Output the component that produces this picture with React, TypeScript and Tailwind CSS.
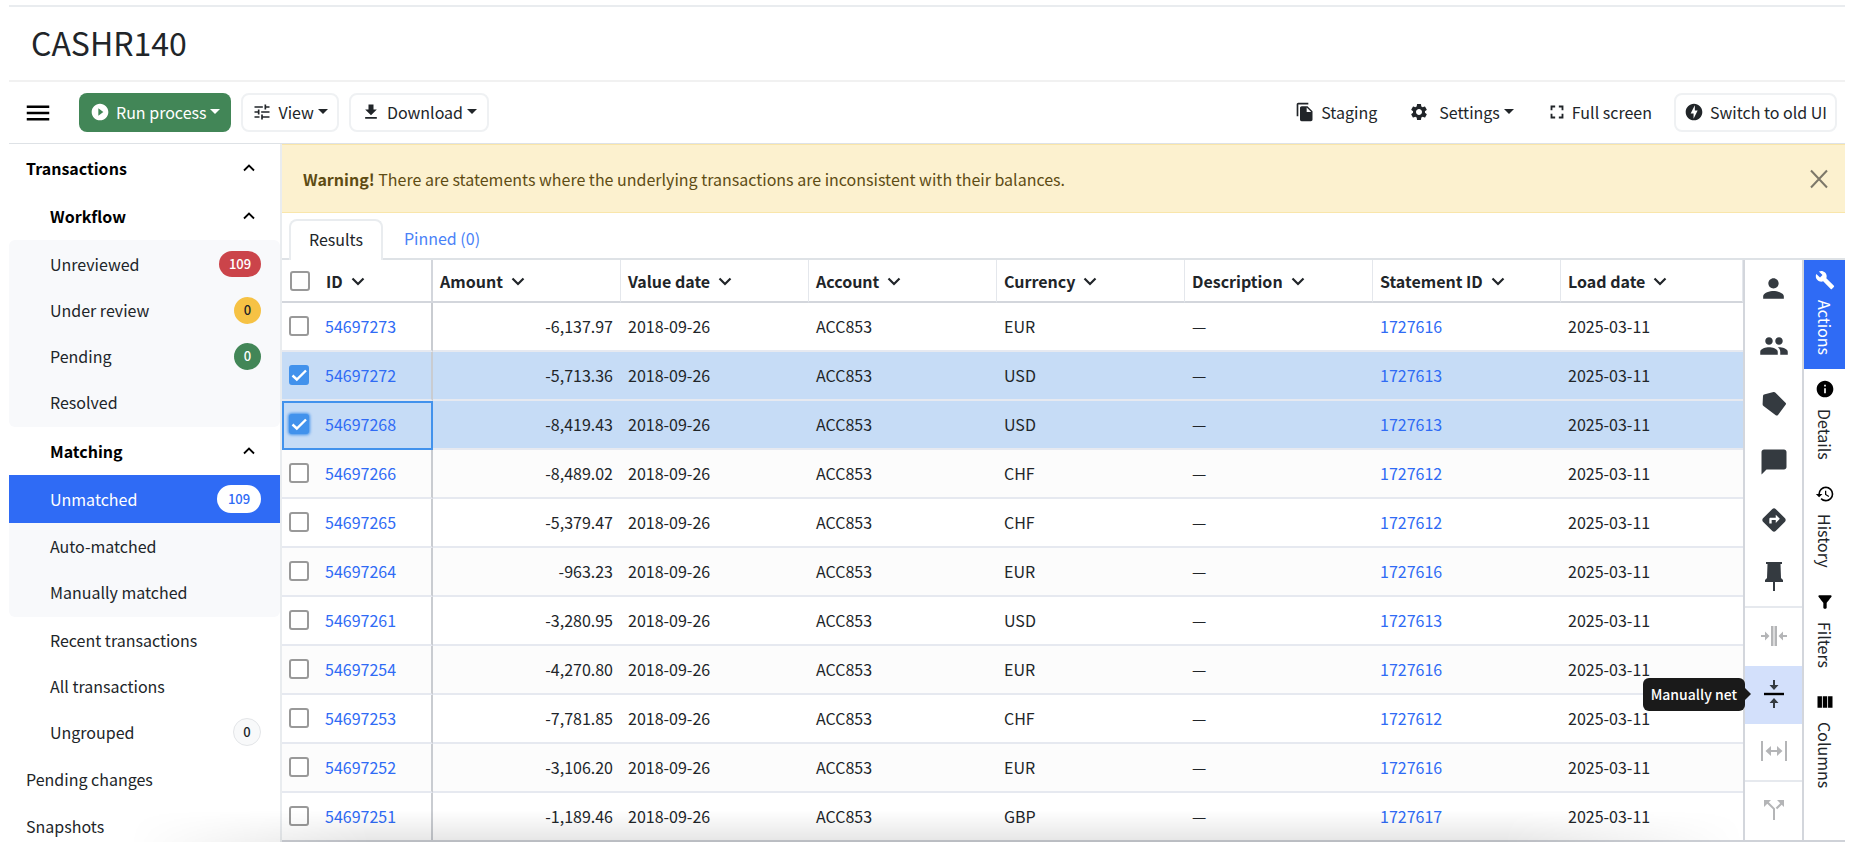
import type { ReactNode } from 'react';
import {
  MdBuild,
  MdChatBubble,
  MdDirections,
  MdFileCopy,
  MdFileDownload,
  MdFilterAlt,
  MdFullscreen,
  MdHistory,
  MdInfo,
  MdMenu,
  MdOfflineBolt,
  MdPeople,
  MdPerson,
  MdPlayCircleFilled,
  MdSettings,
  MdTune,
  MdViewColumn,
} from 'react-icons/md';

interface Transaction {
  id: string;
  amount: string;
  currency: string;
  statement: string;
  selected?: boolean;
  focused?: boolean;
}

const COLUMNS = ['Amount', 'Value date', 'Account', 'Currency', 'Description', 'Statement ID', 'Load date'];

const ROWS: Transaction[] = [
  { id: '54697273', amount: '-6,137.97', currency: 'EUR', statement: '1727616' },
  { id: '54697272', amount: '-5,713.36', currency: 'USD', statement: '1727613', selected: true },
  { id: '54697268', amount: '-8,419.43', currency: 'USD', statement: '1727613', selected: true, focused: true },
  { id: '54697266', amount: '-8,489.02', currency: 'CHF', statement: '1727612' },
  { id: '54697265', amount: '-5,379.47', currency: 'CHF', statement: '1727612' },
  { id: '54697264', amount: '-963.23', currency: 'EUR', statement: '1727616' },
  { id: '54697261', amount: '-3,280.95', currency: 'USD', statement: '1727613' },
  { id: '54697254', amount: '-4,270.80', currency: 'EUR', statement: '1727616' },
  { id: '54697253', amount: '-7,781.85', currency: 'CHF', statement: '1727612' },
  { id: '54697252', amount: '-3,106.20', currency: 'EUR', statement: '1727616' },
  { id: '54697251', amount: '-1,189.46', currency: 'GBP', statement: '1727617' },
];

function Caret() {
  return <span className="ml-1 border-x-[5px] border-t-[5px] border-x-transparent border-t-current" />;
}

function Chevron({ up = false }: { up?: boolean }) {
  return (
    <svg width="14" height="14" viewBox="0 0 14 14" fill="none" stroke="currentColor" strokeWidth={up ? 1.8 : 2.2}>
      {up ? <path d="M2 9.5l5-5 5 5" /> : <path d="M1.5 4.5L7 10l5.500-5.500" />}
    </svg>
  );
}

function Section({ label, top = false }: { label: string; top?: boolean }) {
  return (
    <button
      className={`flex h-12 w-full items-center justify-between pr-6 font-bold text-black ${top ? 'pl-[17px]' : 'pl-[41px]'}`}
    >
      {label}
      <Chevron up />
    </button>
  );
}

function NavItem({
  label,
  badge,
  badgeClass = '',
  top = false,
  active = false,
}: {
  label: string;
  badge?: string;
  badgeClass?: string;
  top?: boolean;
  active?: boolean;
}) {
  return (
    <a
      href="#"
      className={`flex items-center justify-between pr-[19px] ${top ? 'h-[47px] pl-[17px]' : 'min-h-[46px] pl-[41px]'} ${active ? 'bg-[#2f6bf5] text-white' : ''}`}
    >
      {label}
      {badge && (
        <span className={`flex items-center justify-center rounded-full text-[13px] font-medium ${badgeClass}`}>{badge}</span>
      )}
    </a>
  );
}

function ActionButton({ label, children, disabled = false, className = '' }: { label: string; children: ReactNode; disabled?: boolean; className?: string }) {
  return (
    <button
      aria-label={label}
      disabled={disabled}
      className={`relative flex h-[58px] w-full shrink-0 items-center justify-center pb-0.5 ${disabled ? 'text-[#b4b5b7]' : 'text-[#343a40]'} ${className}`}
    >
      {children}
    </button>
  );
}

function SideTab({ label, icon, active = false }: { label: string; icon: ReactNode; active?: boolean }) {
  return (
    <button
      role="tab"
      aria-selected={active}
      className={`flex w-full items-center gap-2.5 pt-2.5 pb-3.5 [writing-mode:vertical-rl] ${active ? 'bg-[#2f6bf5] text-white' : 'text-[#212529]'}`}
    >
      <span className={active ? 'text-white' : 'text-black'}>{icon}</span>
      {label}
    </button>
  );
}

function CheckBox({ label, checked = false, focused = false }: { label: string; checked?: boolean; focused?: boolean }) {
  return (
    <span className="relative flex size-5 shrink-0">
      <input
        type="checkbox"
        aria-label={label}
        defaultChecked={checked}
        className={`peer size-5 appearance-none rounded-[3px] border-2 border-[#999] bg-white checked:border-[#4292ec] checked:bg-[#4292ec] ${focused ? 'shadow-[0_0_3px_1px_#4292ec]' : ''}`}
      />
      <svg className="pointer-events-none absolute inset-0 hidden peer-checked:block" viewBox="0 0 20 20" fill="none" stroke="white" strokeWidth="2.400">
        <path d="M3.500 10.500l4.300 4L17 5.500" />
      </svg>
    </span>
  );
}

export default function App() {
  const outlined = 'flex h-[39px] items-center rounded-lg border-2 border-[#eff1f3] bg-white pb-0.5';

  return (
    <div className="h-screen overflow-hidden bg-white pt-[5px] pr-[31px] pb-1 pl-[9px] font-['Noto_Sans_CJK_SC','Noto_Sans',sans-serif] text-base leading-6 text-[#212529]">
      <div className="relative flex h-full flex-col border-t-2 border-[#e9ecef]">
        <header className="flex h-[75px] shrink-0 items-center border-b-2 border-[#f1f1f1] pb-1 pl-[22px]">
          <h1 className="text-[32px] leading-10">CASHR140</h1>
        </header>

        <div className="flex h-[62px] shrink-0 items-center border-b border-[#dee2e6] pr-2 pl-[14px]">
          <button aria-label="Menu" className="text-black">
            <MdMenu size={30} />
          </button>
          <button className="ml-[26px] flex h-[39px] items-center rounded-lg bg-[#428657] px-[11px] pb-0.5 text-white">
            <MdPlayCircleFilled size={20} className="mr-1.5" />
            Run process
            <Caret />
          </button>
          <button className={`${outlined} ml-2.5 px-[9px]`}>
            <MdTune size={20} className="mr-1.5" />
            View
            <Caret />
          </button>
          <button className={`${outlined} ml-2.5 px-2.5`}>
            <MdFileDownload size={20} className="mr-1.5" />
            Download
            <Caret />
          </button>

          <div className="ml-auto flex items-center">
            <button className="flex items-center pb-0.5">
              <MdFileCopy size={20} className="mr-1.5" />
              Staging
            </button>
            <button className="ml-8 flex items-center pb-0.5">
              <MdSettings size={20} className="mr-2.5" />
              Settings
              <Caret />
            </button>
            <button className="ml-8 flex items-center pb-0.5">
              <MdFullscreen size={22} className="mr-1" />
              Full screen
            </button>
            <button className={`${outlined} ml-[22px] px-2`}>
              <MdOfflineBolt size={20} className="mr-1.5" />
              Switch to old UI
            </button>
          </div>
        </div>

        <div className="flex min-h-0 flex-1">
          <nav className="w-[273px] shrink-0 overflow-hidden border-r-2 border-[#e9ecef]">
            <Section label="Transactions" top />
            <Section label="Workflow" />
            <div className="rounded-md bg-[#f8f9fb] pt-px pb-0.5">
              <NavItem label="Unreviewed" badge="109" badgeClass="h-[26px] w-[42px] bg-[#cb444a] text-white" />
              <NavItem label="Under review" badge="0" badgeClass="size-[27px] bg-[#f6c244]" />
              <NavItem label="Pending" badge="0" badgeClass="size-[27px] bg-[#428657] text-white" />
              <NavItem label="Resolved" />
            </div>
            <Section label="Matching" />
            <div className="rounded-md bg-[#f8f9fb] pb-0.5">
              <NavItem label="Unmatched" badge="109" badgeClass="my-2.5 h-7 w-[44px] bg-white text-[#2f6bf5]" active />
              <NavItem label="Auto-matched" />
              <NavItem label="Manually matched" />
            </div>
            <NavItem label="Recent transactions" />
            <NavItem label="All transactions" />
            <NavItem label="Ungrouped" badge="0" badgeClass="my-[9px] size-7 border border-[#e3e5e8] bg-[#f8f9fa]" />
            <NavItem label="Pending changes" top />
            <NavItem label="Snapshots" top />
          </nav>

          <main className="flex min-w-0 flex-1 flex-col">
            <div className="flex h-[69px] shrink-0 items-center justify-between border-y border-[#f9e6ab] bg-[#fcf1cf] pr-[17px] pl-[21px] text-[#5e4c14]">
              <p>
                <strong>Warning!</strong> There are statements where the underlying transactions are inconsistent with their balances.
              </p>
              <button aria-label="Close" className="text-[#7d7869]">
                <svg width="18" height="20" viewBox="0 0 18 20" stroke="currentColor" strokeWidth="2">
                  <path d="M1 1.500l16 17M17 1.500l-16 17" />
                </svg>
              </button>
            </div>

            <div role="tablist" className="flex h-[47px] shrink-0 items-end border-b-2 border-[#dee2e6] pl-[7px]">
              <button role="tab" aria-selected="true" className="-mb-0.5 h-[41px] rounded-t-lg border-2 border-b-0 border-[#e9ecef] bg-white px-[18px] pb-1">
                Results
              </button>
              <button role="tab" aria-selected="false" className="h-[39px] px-[21px] pb-0.5 text-[#4a82f7]">
                Pinned (0)
              </button>
            </div>

            <div className="flex min-h-0 flex-1 border-b-2 border-[#cfd2d8]">
              <div className="min-w-0 flex-1 overflow-hidden">
                <table className="w-full table-fixed border-separate border-spacing-0">
                  <colgroup>
                    <col className="w-[151px]" />
                    {COLUMNS.map((c) => (
                      <col key={c} className="w-[188px] last:w-auto" />
                    ))}
                  </colgroup>
                  <thead>
                    <tr className="h-[43px] text-left">
                      <th className="border-r-2 border-b-2 border-[#d3d6dc] p-0 pl-2 font-bold">
                        <span className="flex items-center">
                          <CheckBox label="Select all" />
                          <span className="mr-2 ml-4">ID</span>
                          <Chevron />
                        </span>
                      </th>
                      {COLUMNS.map((c) => (
                        <th key={c} className="border-r border-b-2 border-r-[#e4e7ec] border-b-[#d3d6dc] p-0 pl-[7px] font-bold">
                          <span className="flex items-center gap-2 whitespace-nowrap">
                            {c}
                            <Chevron />
                          </span>
                        </th>
                      ))}
                    </tr>
                  </thead>
                  <tbody className="[&_td]:border-b-2 [&_td]:border-b-[#e6e9f0] [&_td]:p-0 [&_td]:pb-0.5 [&_td]:pl-[7px]">
                    {ROWS.map((r, i) => (
                      <tr key={r.id} className={`h-[49px] ${r.selected ? 'bg-[#c6dcf6]' : i % 2 ? 'bg-[#fcfcfc]' : 'bg-white'}`}>
                        <td className={`border-r-2 border-r-[#c9ccd1] ${r.focused ? 'outline outline-2 -outline-offset-2 outline-[#4292ec]' : ''}`}>
                          <span className="flex items-center gap-4">
                            <CheckBox label={`Select ${r.id}`} checked={r.selected} focused={r.focused} />
                            <a href="#" className="text-[#2f6bf5]">{r.id}</a>
                          </span>
                        </td>
                        <td className="text-right">
                          <span className="pr-2">{r.amount}</span>
                        </td>
                        <td>2018-09-26</td>
                        <td>ACC853</td>
                        <td>{r.currency}</td>
                        <td>—</td>
                        <td>
                          <a href="#" className="text-[#2f6bf5]">{r.statement}</a>
                        </td>
                        <td>2025-03-11</td>
                      </tr>
                    ))}
                  </tbody>
                </table>
              </div>

              <div className="flex w-[61px] shrink-0 flex-col border-x-2 border-[#d3d6dc]">
                <ActionButton label="Assign">
                  <MdPerson size={31} />
                </ActionButton>
                <ActionButton label="Assign group">
                  <MdPeople size={30} />
                </ActionButton>
                <ActionButton label="Label">
                  <svg width="26" height="26" viewBox="0 0 26 26" fill="currentColor">
                    <path d="M3 3.500L12.500 1q1.200-.2 2 .7l10 10q1 1 .1 2.100L17 24q-1.200 1.200-2.600 0L2.500 15Q1.500 14 1.600 13L2 5Q2.100 3.800 3 3.500z" />
                  </svg>
                </ActionButton>
                <ActionButton label="Comment">
                  <MdChatBubble size={30} />
                </ActionButton>
                <ActionButton label="Escalate">
                  <MdDirections size={28} />
                </ActionButton>
                <ActionButton label="Pin" className="border-b-2 border-[#e6e9ee]">
                  <svg width="20" height="30" viewBox="0 0 20 30" fill="currentColor">
                    <path d="M2 0h16v2h-1.500l.5 14 2 2v2h-8v9H9v-9H1v-2l2-2L3.500 2H2z" />
                  </svg>
                </ActionButton>
                <ActionButton label="Manually match" disabled>
                  <svg width="26" height="20" viewBox="0 0 26 20" fill="currentColor">
                    <path d="M10 0h2v20h-2zM12.500 0h1v20h-1zM14 0h2v20h-2zM0 9h4V5.500L8.500 10 4 14.500V11H0zM26 9h-4V5.500L17.500 10l4.500 4.500V11h4z" />
                  </svg>
                </ActionButton>
                <ActionButton label="Manually net" className="bg-[#d3e0fb]">
                  <svg width="20" height="28" viewBox="0 0 20 28" fill="currentColor">
                    <path d="M9 0h2v5h3.500L10 10 5.500 5H9zM9 28h2v-5h3.500L10 18l-4.500 5H9z" />
                    <path d="M0 12.800h20v2.400H0z" fill="black" />
                  </svg>
                  <span role="tooltip" className="absolute right-full z-10 flex h-[33px] items-center rounded-md bg-[#1a1a1a] px-2 text-sm font-medium whitespace-nowrap text-white">
                    Manually net
                    <span className="absolute left-full border-y-[6px] border-l-[6px] border-y-transparent border-l-[#1a1a1a]" />
                  </span>
                </ActionButton>
                <ActionButton label="Split" disabled className="border-b-2 border-[#e6e9ee]">
                  <svg width="26" height="20" viewBox="0 0 26 20" fill="currentColor">
                    <path d="M0 0h2v20H0zM24 0h2v20h-2zM4.500 10L10 5v4h6V5l5.500 5-5.500 5v-4h-6v4z" />
                  </svg>
                </ActionButton>
                <ActionButton label="Unmatch" disabled>
                  <svg width="20" height="20" viewBox="0 0 20 20" fill="currentColor">
                    <path d="M0 0h7L4.800 2.200l6.200 6.200V20H9V9.300L3.300 3.700 0 7zM20 0v7l-2.300-2.300-4.500 4.500-1.500-1.500 4.500-4.500L13 0z" />
                  </svg>
                </ActionButton>
              </div>

              <div role="tablist" className="flex w-[41px] shrink-0 flex-col">
                <SideTab label="Actions" icon={<MdBuild size={20} />} active />
                <SideTab label="Details" icon={<MdInfo size={20} />} />
                <SideTab label="History" icon={<MdHistory size={20} />} />
                <SideTab label="Filters" icon={<MdFilterAlt size={20} />} />
                <SideTab label="Columns" icon={<MdViewColumn size={20} />} />
              </div>
            </div>
          </main>
        </div>

        {/* soft shade along the bottom edge */}
        <div className="pointer-events-none absolute right-[100px] bottom-0 left-[120px] h-8 bg-linear-to-t from-black/10 to-transparent mask-x-from-85%" />
      </div>
    </div>
  );
}
